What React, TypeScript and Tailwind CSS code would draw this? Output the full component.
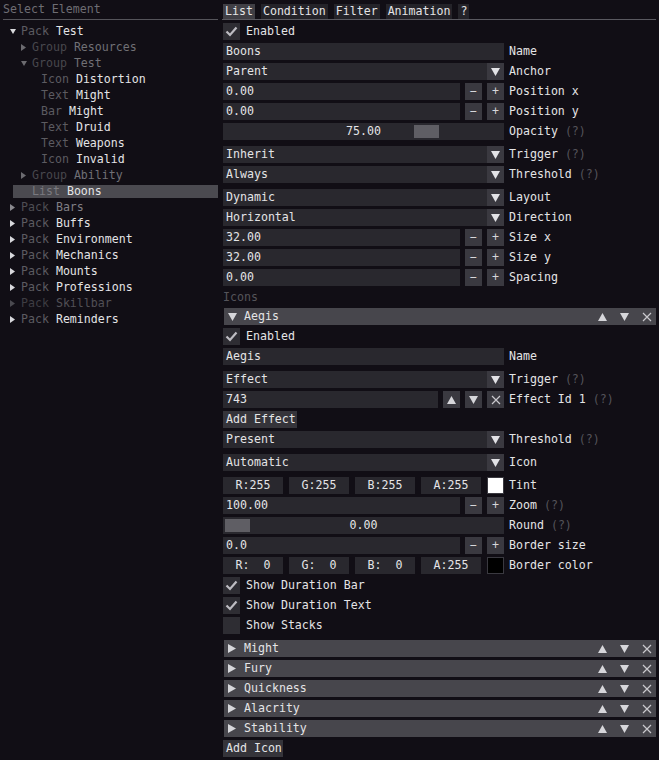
import React from 'react';

type Dir = 'up' | 'down' | 'right';

function Tri({ dir, w, h, color }: { dir: Dir; w: number; h: number; color: string }) {
  const pts =
    dir === 'down'
      ? `0,0 ${w},0 ${w / 2},${h}`
      : dir === 'up'
      ? `0,${h} ${w},${h} ${w / 2},0`
      : `0,0 ${w},${h / 2} 0,${h}`;
  return (
    <svg width={w} height={h} viewBox={`0 0 ${w} ${h}`} className="block">
      <polygon points={pts} fill={color} />
    </svg>
  );
}

function XMark({ color = '#c9c8cd' }: { color?: string }) {
  return (
    <svg width="10" height="10" viewBox="0 0 10 10" className="block">
      <path d="M1 1 L9 9 M9 1 L1 9" stroke={color} strokeWidth="1.2" />
    </svg>
  );
}

function CheckMark() {
  return (
    <svg width="13" height="11" viewBox="0 0 13 11" className="block">
      <path d="M1.5 5.5 L5 9 L11.5 1.5" stroke="#bdbcc2" strokeWidth="2.2" fill="none" />
    </svg>
  );
}

function Help() {
  return <span className="ml-[7px] text-[#55545a]">(?)</span>;
}

function Row({ label, help, children, extra }: { label: string; help?: boolean; children: React.ReactNode; extra?: boolean }) {
  return (
    <div className={extra ? 'mt-[3px] flex h-[17px] items-center' : 'flex h-[17px] items-center'}>
      <div className="flex h-[17px] w-[281px]">{children}</div>
      <span className="ml-[5px] whitespace-pre">{label}</span>
      {help && <Help />}
    </div>
  );
}

function Field({ text, w }: { text: string; w?: string }) {
  return (
    <div className={`flex h-[17px] items-center bg-[#29282e] pl-[3px] ${w ?? 'flex-1'}`}>
      <span className="whitespace-pre">{text}</span>
    </div>
  );
}

function SmallBtn({ children }: { children: React.ReactNode }) {
  return (
    <div className="ml-[5px] flex h-[17px] w-[17px] items-center justify-center bg-[#3a3940] text-[#d6d6da]">
      {children}
    </div>
  );
}

function Combo({ text }: { text: string }) {
  return (
    <>
      <Field text={text} />
      <div className="flex h-[17px] w-[17px] items-center justify-center bg-[#3a3940]">
        <Tri dir="down" w={9} h={8} color="#e2e2e6" />
      </div>
    </>
  );
}

function Stepper({ text }: { text: string }) {
  return (
    <>
      <Field text={text} w="w-[237px]" />
      <SmallBtn>−</SmallBtn>
      <SmallBtn>+</SmallBtn>
    </>
  );
}

function Slider({ text, grab }: { text: string; grab: string }) {
  return (
    <div className="relative flex h-[17px] flex-1 items-center justify-center bg-[#29282e]">
      <div className={`absolute top-[2px] h-[13px] w-[25px] bg-[#5f5e64] ${grab}`} />
      <span className="relative">{text}</span>
    </div>
  );
}

function ColorEdit({ vals, swatch }: { vals: string[]; swatch: string }) {
  return (
    <>
      {vals.map((v, i) => (
        <div
          key={i}
          className={`flex h-[17px] w-[60px] items-center justify-center whitespace-pre bg-[#29282e] ${i > 0 ? 'ml-[6px]' : ''}`}
        >
          {v}
        </div>
      ))}
      <div className={`ml-[6px] h-[17px] w-[17px] border border-[#3a3940] ${swatch}`} />
    </>
  );
}

function Checkbox({ label, checked, extra }: { label: string; checked: boolean; extra?: boolean }) {
  return (
    <div className={extra ? 'mt-[3px] flex h-[17px] items-center' : 'flex h-[17px] items-center'}>
      <div className="flex h-[17px] w-[17px] items-center justify-center bg-[#2e2d33]">{checked && <CheckMark />}</div>
      <span className="ml-[6px]">{label}</span>
    </div>
  );
}

function Header({ title, open, extra }: { title: string; open?: boolean; extra?: boolean }) {
  return (
    <div
      className={`${extra ? 'mt-[3px] ' : ''}ml-[1px] flex h-[17px] w-[432px] items-center bg-[#47464c] pl-[4px] pr-[4px]`}
    >
      <div className="flex w-[15px] items-center">
        {open ? <Tri dir="down" w={9} h={8} color="#d6d6da" /> : <Tri dir="right" w={8} h={9} color="#d6d6da" />}
      </div>
      <span className="ml-[1px] flex-1">{title}</span>
      <Tri dir="up" w={9} h={8} color="#d6d6da" />
      <div className="ml-[13px]">
        <Tri dir="down" w={9} h={8} color="#d6d6da" />
      </div>
      <div className="ml-[13px]">
        <XMark />
      </div>
    </div>
  );
}

function Button({ text, w }: { text: string; w: string }) {
  return (
    <div className={`flex h-[17px] items-center bg-[#35343a] pl-[3px] ${w}`}>
      <span>{text}</span>
    </div>
  );
}

type TreeItem = {
  label: string;
  name: string;
  level: 0 | 1 | 2;
  arrow?: 'open' | 'closed';
  labelColor: string;
  nameColor: string;
  arrowColor?: string;
  selected?: boolean;
};

const B = '#e4e4e6';
const tree: TreeItem[] = [
  { label: 'Pack', name: 'Test', level: 0, arrow: 'open', labelColor: '#5c5b61', nameColor: B, arrowColor: '#d8d8dc' },
  { label: 'Group', name: 'Resources', level: 1, arrow: 'closed', labelColor: '#48474d', nameColor: '#707075', arrowColor: '#6c6b70' },
  { label: 'Group', name: 'Test', level: 1, arrow: 'open', labelColor: '#48474d', nameColor: '#707075', arrowColor: '#6c6b70' },
  { label: 'Icon', name: 'Distortion', level: 2, labelColor: '#5c5b61', nameColor: B },
  { label: 'Text', name: 'Might', level: 2, labelColor: '#5c5b61', nameColor: B },
  { label: 'Bar', name: 'Might', level: 2, labelColor: '#5c5b61', nameColor: B },
  { label: 'Text', name: 'Druid', level: 2, labelColor: '#5c5b61', nameColor: B },
  { label: 'Text', name: 'Weapons', level: 2, labelColor: '#5c5b61', nameColor: B },
  { label: 'Icon', name: 'Invalid', level: 2, labelColor: '#5c5b61', nameColor: B },
  { label: 'Group', name: 'Ability', level: 1, arrow: 'closed', labelColor: '#48474d', nameColor: '#707075', arrowColor: '#6c6b70' },
  { label: 'List', name: 'Boons', level: 1, labelColor: '#7a797f', nameColor: B, selected: true },
  { label: 'Pack', name: 'Bars', level: 0, arrow: 'closed', labelColor: '#4e4d53', nameColor: '#807f85', arrowColor: '#8a898e' },
  { label: 'Pack', name: 'Buffs', level: 0, arrow: 'closed', labelColor: '#5c5b61', nameColor: B, arrowColor: '#d8d8dc' },
  { label: 'Pack', name: 'Environment', level: 0, arrow: 'closed', labelColor: '#5c5b61', nameColor: B, arrowColor: '#d8d8dc' },
  { label: 'Pack', name: 'Mechanics', level: 0, arrow: 'closed', labelColor: '#5c5b61', nameColor: B, arrowColor: '#d8d8dc' },
  { label: 'Pack', name: 'Mounts', level: 0, arrow: 'closed', labelColor: '#5c5b61', nameColor: B, arrowColor: '#d8d8dc' },
  { label: 'Pack', name: 'Professions', level: 0, arrow: 'closed', labelColor: '#5c5b61', nameColor: B, arrowColor: '#d8d8dc' },
  { label: 'Pack', name: 'Skillbar', level: 0, arrow: 'closed', labelColor: '#3e3d43', nameColor: '#515056', arrowColor: '#4a494f' },
  { label: 'Pack', name: 'Reminders', level: 0, arrow: 'closed', labelColor: '#5c5b61', nameColor: B, arrowColor: '#d8d8dc' },
];

function TreeRow({ item }: { item: TreeItem }) {
  const indent = item.level === 0 ? 'pl-[7px]' : item.level === 1 ? 'pl-[18px]' : 'pl-[38px]';
  const text = (
    <span className="whitespace-pre">
      <span style={{ color: item.labelColor }}>{item.label}</span>{' '}
      <span style={{ color: item.nameColor }}>{item.name}</span>
    </span>
  );
  if (item.selected) {
    return (
      <div className="flex h-[16px] items-center pl-[10px]">
        <div className="flex h-[13px] flex-1 items-center bg-[#4b4a50] pl-[19px]">{text}</div>
      </div>
    );
  }
  return (
    <div className={`flex h-[16px] items-center ${indent}`}>
      {item.arrow && (
        <div className="flex w-[11px] items-center">
          {item.arrow === 'open' ? (
            <Tri dir="down" w={6} h={5} color={item.arrowColor!} />
          ) : (
            <Tri dir="right" w={5} h={7} color={item.arrowColor!} />
          )}
        </div>
      )}
      {text}
    </div>
  );
}

export default function App() {
  return (
    <div className="flex h-[760px] w-[659px] overflow-hidden bg-[#110e15] font-['DejaVu_Sans_Mono','Liberation_Mono',monospace] text-[11.6px] leading-[13px] text-[#e4e4e6]">
      {/* element tree */}
      <div className="w-[222px] pl-[3px] pr-[4px] pt-[3px]">
        <div className="flex h-[13px] items-center text-[#6e6d73]">Select Element</div>
        <div className="mt-[3px] h-px bg-[#55545a]" />
        <div className="mt-[3px]">
          {tree.map((t, i) => (
            <TreeRow key={i} item={t} />
          ))}
        </div>
      </div>

      {/* settings */}
      <div className="flex-1 pr-[3px] pt-[4px]">
        <div className="flex h-[16px] gap-[6px] border-b border-[#5a5960] pl-[1px]">
          <div className="flex h-[15px] items-center bg-[#403f45] px-[2px]">List</div>
          <div className="flex h-[15px] items-center bg-[#242329] px-[2px]">Condition</div>
          <div className="flex h-[15px] items-center bg-[#242329] px-[2px]">Filter</div>
          <div className="flex h-[15px] items-center bg-[#242329] px-[2px]">Animation</div>
          <div className="flex h-[15px] items-center bg-[#242329] px-[2px]">?</div>
        </div>

        <div className="mt-[3px] flex flex-col gap-[3px] pl-[1px]">
          <Checkbox label="Enabled" checked />
          <Row label="Name">
            <Field text="Boons" />
          </Row>
          <Row label="Anchor">
            <Combo text="Parent" />
          </Row>
          <Row label="Position x">
            <Stepper text="0.00" />
          </Row>
          <Row label="Position y">
            <Stepper text="0.00" />
          </Row>
          <Row label="Opacity" help>
            <Slider text="75.00" grab="left-[191px]" />
          </Row>
          <Row label="Trigger" help extra>
            <Combo text="Inherit" />
          </Row>
          <Row label="Threshold" help>
            <Combo text="Always" />
          </Row>
          <Row label="Layout" extra>
            <Combo text="Dynamic" />
          </Row>
          <Row label="Direction">
            <Combo text="Horizontal" />
          </Row>
          <Row label="Size x">
            <Stepper text="32.00" />
          </Row>
          <Row label="Size y">
            <Stepper text="32.00" />
          </Row>
          <Row label="Spacing">
            <Stepper text="0.00" />
          </Row>
          <div className="flex h-[16px] items-center text-[#55545a]">Icons</div>
          <Header title="Aegis" open />
          <Checkbox label="Enabled" checked />
          <Row label="Name">
            <Field text="Aegis" />
          </Row>
          <Row label="Trigger" help extra>
            <Combo text="Effect" />
          </Row>
          <Row label="Effect Id 1" help>
            <Field text="743" w="w-[215px]" />
            <SmallBtn>
              <Tri dir="up" w={9} h={8} color="#d6d6da" />
            </SmallBtn>
            <SmallBtn>
              <Tri dir="down" w={9} h={8} color="#d6d6da" />
            </SmallBtn>
            <SmallBtn>
              <XMark />
            </SmallBtn>
          </Row>
          <Button text="Add Effect" w="w-[74px]" />
          <Row label="Threshold" help>
            <Combo text="Present" />
          </Row>
          <Row label="Icon" extra>
            <Combo text="Automatic" />
          </Row>
          <Row label="Tint" extra>
            <ColorEdit vals={['R:255', 'G:255', 'B:255', 'A:255']} swatch="bg-white" />
          </Row>
          <Row label="Zoom" help>
            <Stepper text="100.00" />
          </Row>
          <Row label="Round" help>
            <Slider text="0.00" grab="left-[2px]" />
          </Row>
          <Row label="Border size">
            <Stepper text="0.0" />
          </Row>
          <Row label="Border color">
            <ColorEdit vals={['R:  0', 'G:  0', 'B:  0', 'A:255']} swatch="bg-black" />
          </Row>
          <Checkbox label="Show Duration Bar" checked />
          <Checkbox label="Show Duration Text" checked />
          <Checkbox label="Show Stacks" checked={false} />
          <Header title="Might" extra />
          <Header title="Fury" />
          <Header title="Quickness" />
          <Header title="Alacrity" />
          <Header title="Stability" />
          <Button text="Add Icon" w="w-[60px]" />
        </div>
      </div>
    </div>
  );
}
